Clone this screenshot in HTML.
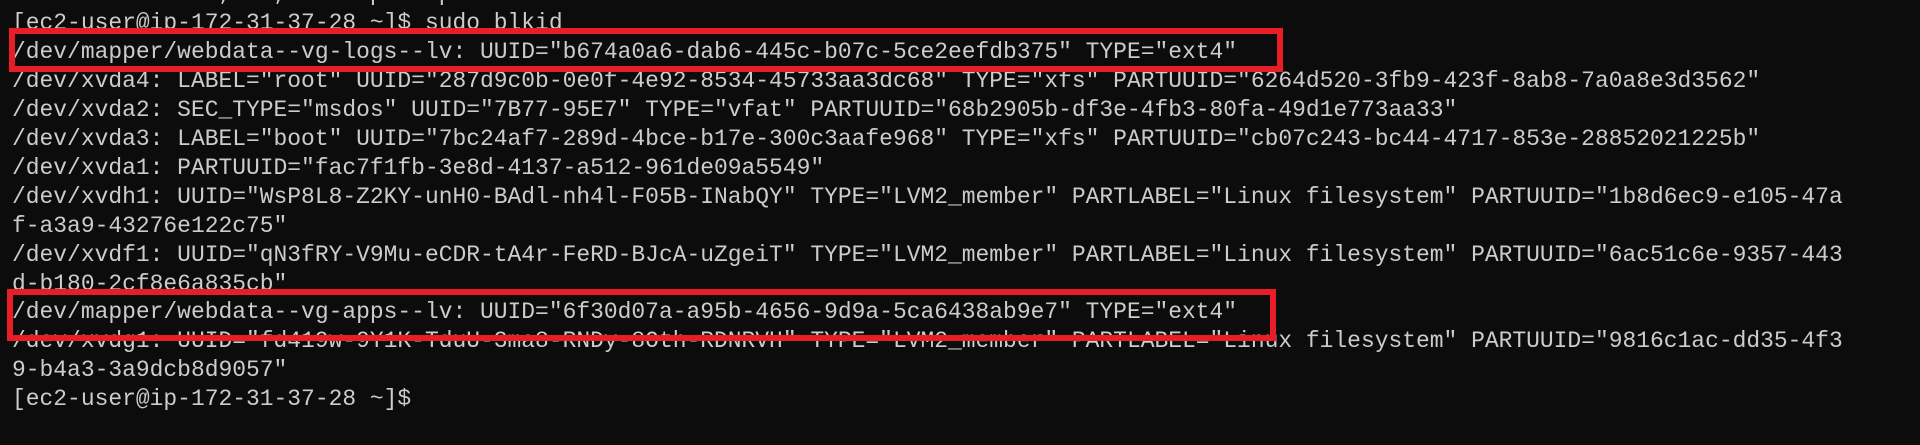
<!DOCTYPE html>
<html><head><meta charset="utf-8"><style>
html,body{margin:0;padding:0;background:#0c0c0c;width:1920px;height:445px;overflow:hidden}
pre{position:absolute;left:12px;top:-20px;margin:0;font-family:"Liberation Mono","DejaVu Sans Mono",monospace;font-size:22.95px;line-height:28.95px;color:#cccccc;white-space:pre}
.b{position:absolute;border:6px solid #e81d25;box-sizing:border-box}
</style></head><body>
<pre>total size is 1,174,166  speedup is 1.00
[ec2-user@ip-172-31-37-28 ~]$ sudo blkid
/dev/mapper/webdata--vg-logs--lv: UUID="b674a0a6-dab6-445c-b07c-5ce2eefdb375" TYPE="ext4"
/dev/xvda4: LABEL="root" UUID="287d9c0b-0e0f-4e92-8534-45733aa3dc68" TYPE="xfs" PARTUUID="6264d520-3fb9-423f-8ab8-7a0a8e3d3562"
/dev/xvda2: SEC_TYPE="msdos" UUID="7B77-95E7" TYPE="vfat" PARTUUID="68b2905b-df3e-4fb3-80fa-49d1e773aa33"
/dev/xvda3: LABEL="boot" UUID="7bc24af7-289d-4bce-b17e-300c3aafe968" TYPE="xfs" PARTUUID="cb07c243-bc44-4717-853e-28852021225b"
/dev/xvda1: PARTUUID="fac7f1fb-3e8d-4137-a512-961de09a5549"
/dev/xvdh1: UUID="WsP8L8-Z2KY-unH0-BAdl-nh4l-F05B-INabQY" TYPE="LVM2_member" PARTLABEL="Linux filesystem" PARTUUID="1b8d6ec9-e105-47a
f-a3a9-43276e122c75"
/dev/xvdf1: UUID="qN3fRY-V9Mu-eCDR-tA4r-FeRD-BJcA-uZgeiT" TYPE="LVM2_member" PARTLABEL="Linux filesystem" PARTUUID="6ac51c6e-9357-443
d-b180-2cf8e6a835cb"
/dev/mapper/webdata--vg-apps--lv: UUID="6f30d07a-a95b-4656-9d9a-5ca6438ab9e7" TYPE="ext4"
/dev/xvdg1: UUID="fd419w-9Y1K-TduU-3ma8-RNDy-8Oth-RDNRVH" TYPE="LVM2_member" PARTLABEL="Linux filesystem" PARTUUID="9816c1ac-dd35-4f3
9-b4a3-3a9dcb8d9057"
[ec2-user@ip-172-31-37-28 ~]$</pre>
<div class="b" style="left:9px;top:28px;width:1274px;height:44px"></div>
<div class="b" style="left:7px;top:289px;width:1269px;height:52px"></div>
</body></html>
